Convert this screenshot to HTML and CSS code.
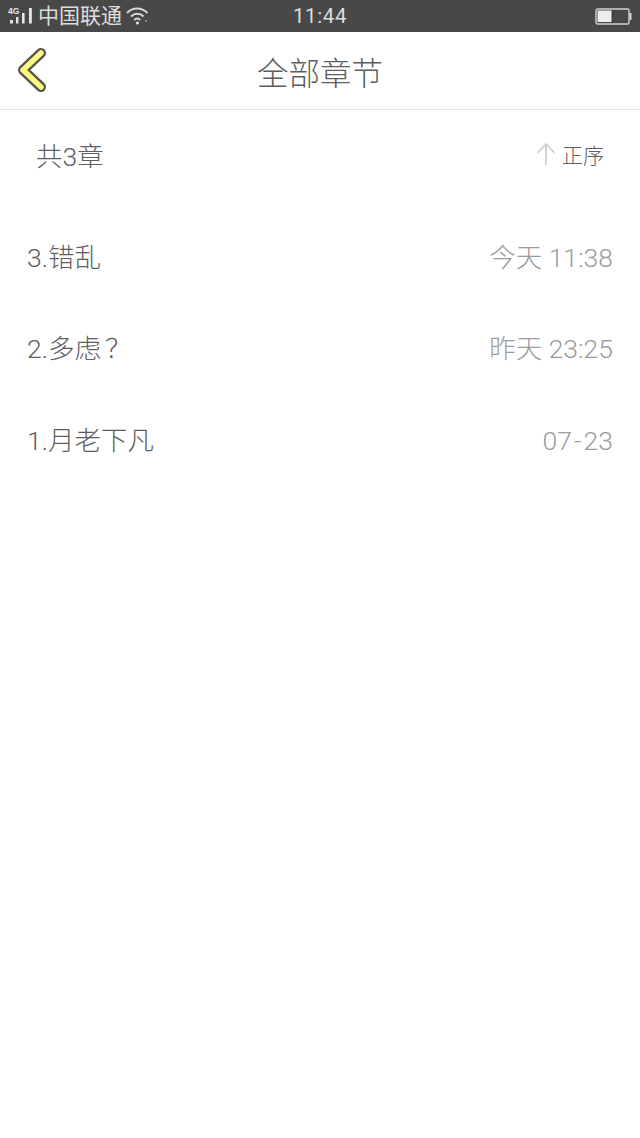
FILE: index.html
```html
<!DOCTYPE html>
<html lang="zh">
<head>
<meta charset="utf-8">
<title>全部章节</title>
<link rel="stylesheet" href="styles.css">
</head>
<body>
<div class="status">
  <div class="status-left">
    <svg class="signal" width="24" height="32" viewBox="0 0 24 32">
      <text x="0" y="14" class="net">4G</text>
      <rect x="2" y="20" width="3" height="3.500"/>
      <rect x="8" y="17" width="2.400" height="6.500"/>
      <rect x="14" y="13" width="2.600" height="10.500"/>
      <rect x="21" y="8" width="2.800" height="15.500"/>
    </svg>
    <span class="carrier">中国联通</span>
    <svg class="wifi" width="24" height="32" viewBox="0 0 24 32" fill="none" stroke="#d8d8d8" stroke-width="2">
      <path d="M1 13C6.500 7 15.500 7 21.500 13"/>
      <path d="M5 16.500C8.500 12.800 14 12.800 17.500 16.500"/>
      <path d="M8.300 20C10 18 12.500 18 14.200 20"/>
      <circle cx="11.500" cy="23" r="1.500" fill="#e6e6e6" stroke="none"/>
      <circle cx="20" cy="21" r="1" fill="#9a9a9a" stroke="none"/>
    </svg>
  </div>
  <span class="clock">11:44</span>
  <svg class="battery" width="37" height="17" viewBox="0 0 37 17">
    <rect x="1" y="1" width="33" height="15" rx="1.500" fill="none" stroke="#d0d0d0" stroke-width="1.400"/>
    <rect x="2.500" y="2.500" width="14" height="11.500" fill="#ececec"/>
    <rect x="17" y="2" width="1" height="13" fill="#383838"/>
    <rect x="34.500" y="5" width="2" height="7" fill="#d8d8d8"/>
  </svg>
</div>
<header class="nav">
  <svg class="back" width="32" height="46" viewBox="0 0 32 46">
    <path d="M25 5L7 22L25 39" fill="none" stroke="#55534a" stroke-width="10" stroke-linecap="round" stroke-linejoin="round"/>
    <path d="M25 5L7 22L25 39" fill="none" stroke="#fbf883" stroke-width="5.500" stroke-linecap="round" stroke-linejoin="round"/>
  </svg>
  <h1 class="title">全部章节</h1>
</header>
<main>
  <div class="summary">
    <span class="count">共3章</span>
    <div class="sort">
      <svg width="22" height="24" viewBox="0 0 22 24" fill="none" stroke="#cfcfcf" stroke-width="1.800">
        <path d="M11 23V2M2.500 11L11 2L19.500 11"/>
      </svg>
      <span>正序</span>
    </div>
  </div>
  <ul class="list">
    <li class="row"><span class="name">3.错乱</span><span class="time">今天 11:38</span></li>
    <li class="row"><span class="name">2.多虑<span class="qmark">？</span></span><span class="time">昨天 23:25</span></li>
    <li class="row"><span class="name">1.月老下凡</span><span class="time">07<span class="dash">-</span>23</span></li>
  </ul>
</main>
</body>
</html>
```
FILE: styles.css
```css
* { box-sizing: border-box; }
html, body { margin: 0; padding: 0; }
body {
  width: 640px;
  height: 1138px;
  background: #fff;
  overflow: hidden;
  font-family: Roboto, "Noto Sans CJK SC", sans-serif;
  font-weight: 300;
  color: #5e5e5e;
}
.status {
  height: 32px;
  background: #484848;
  color: #dcdcdc;
  display: grid;
  grid-template-columns: 1fr auto 1fr;
  align-items: center;
  padding: 0 8px;
}
.status-left { display: flex; align-items: center; gap: 6px; }
.signal { fill: #e6e6e6; }
.net { font: bold 8.500px "Liberation Sans", sans-serif; fill: #e6e6e6; }
.carrier { font-size: 21px; line-height: 32px; font-weight: 400; }
.wifi { margin-left: -2px; }
.clock { font-size: 20.500px; letter-spacing: 0.600px; font-weight: 400; }
.battery { justify-self: end; }
.nav {
  height: 78px;
  border-bottom: 1px solid #e4e4e4;
  display: flex;
  align-items: center;
  justify-content: center;
  position: relative;
}
.back { position: absolute; left: 16px; top: 16px; }
.title { margin: 0; font-size: 31.500px; font-weight: 300; color: #5e5e5e; }
.summary {
  height: 88px;
  padding: 0 36px;
  display: flex;
  align-items: center;
  justify-content: space-between;
}
.count { font-size: 26.500px; }
.sort { display: flex; align-items: center; gap: 5px; font-size: 21px; }
.list { margin: 0; padding: 14px 27px 0; list-style: none; }
.row {
  height: 91.500px;
  display: flex;
  align-items: center;
  justify-content: space-between;
  font-size: 26.500px;
  line-height: 36px;
}
.time { color: #9c9c9c; }
.qmark { padding-left: 4px; }
.dash { padding: 0 2px; }
```
